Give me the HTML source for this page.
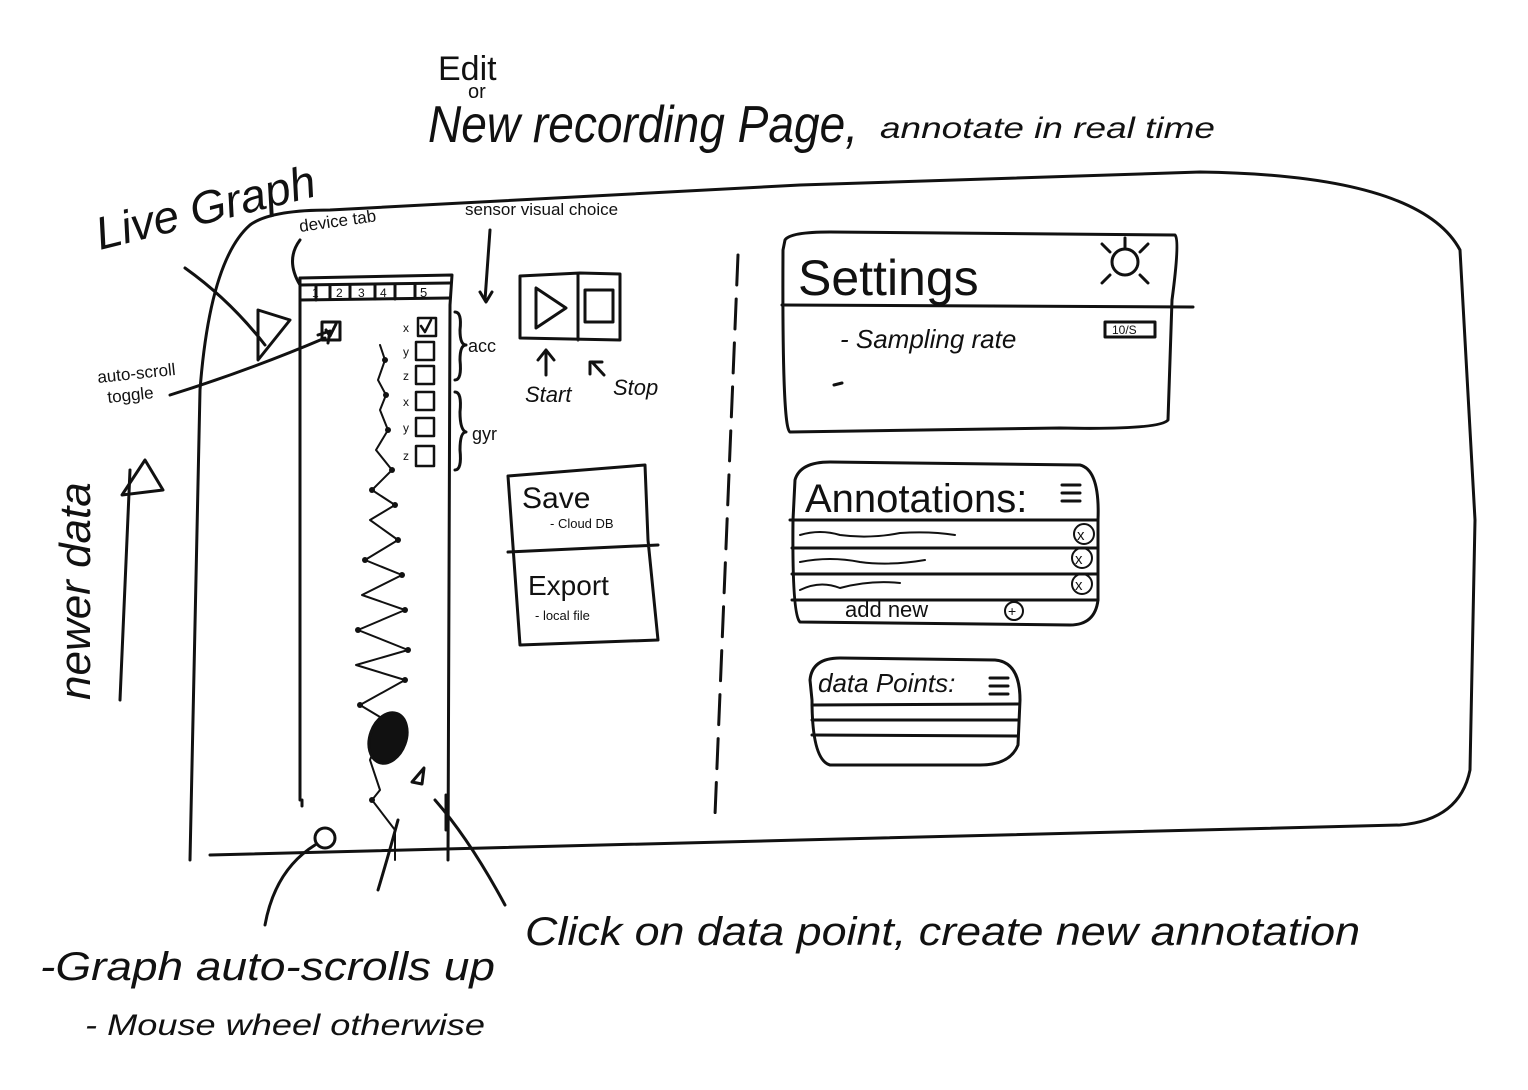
<!DOCTYPE html>
<html><head><meta charset="utf-8"><style>
html,body{margin:0;padding:0;background:#fff;}
svg{display:block}
text{font-family:"Liberation Sans",sans-serif;fill:#111}
</style></head><body>
<svg width="1528" height="1090" viewBox="0 0 1528 1090" xmlns="http://www.w3.org/2000/svg" fill="none" stroke="#111" stroke-width="3" stroke-linecap="round" stroke-linejoin="round">
<text x="438" y="80" font-size="34" stroke="none">Edit</text>
<text x="468" y="98" font-size="20" stroke="none">or</text>
<text x="428" y="142" font-size="52" stroke="none" font-style="italic" textLength="430" lengthAdjust="spacingAndGlyphs">New recording Page,</text>
<text x="880" y="138" font-size="30" stroke="none" font-style="italic" textLength="335" lengthAdjust="spacingAndGlyphs">annotate in real time</text>
<text x="100" y="250" font-size="46" stroke="none" transform="rotate(-14 100 250)" font-style="italic">Live Graph</text>
<text x="300" y="232" font-size="17" stroke="none" transform="rotate(-8 300 232)">device tab</text>
<text x="465" y="215" font-size="17" stroke="none">sensor visual choice</text>
<text x="98" y="383" font-size="17" stroke="none" transform="rotate(-6 98 383)">auto-scroll</text>
<text x="108" y="403" font-size="17" stroke="none" transform="rotate(-6 108 403)">toggle</text>
<text x="90" y="700" font-size="44" stroke="none" transform="rotate(-90 90 700)" font-style="italic">newer data</text>
<path d="M190 860 L200 390 Q210 260 250 225 Q270 210 330 210 L800 185 L1200 172 Q1420 175 1460 250 L1475 520 L1470 770 Q1460 820 1400 825 L800 840 L210 855"/>
<path d="M120 700 L130 470"/><path d="M122 495 L145 460 L163 490 Z"/>
<path d="M185 268 Q230 300 265 345"/><path d="M258 310 L290 320 L258 360 Z"/>
<path d="M170 395 Q250 370 325 338"/><path d="M318 335 l12 -4 l-2 12"/>
<path d="M300 285 Q285 260 300 240"/>
<path d="M490 230 L485 300"/><path d="M480 292 l6 10 l6 -10"/>
<path d="M300 278 L452 275 L450 305 L448 860"/>
<path d="M300 278 L300 800"/>
<path d="M300 285 L450 283 M300 300 L450 298"/>
<path d="M316 286 V300 M330 285 V299 M350 285 V299 M375 285 V299 M395 285 V299 M415 284 V298"/>
<text x="312" y="297" font-size="12" stroke="none">1</text><text x="336" y="297" font-size="12" stroke="none">2</text><text x="358" y="297" font-size="12" stroke="none">3</text><text x="380" y="297" font-size="12" stroke="none">4</text><text x="420" y="297" font-size="13" stroke="none">5</text>
<rect x="322" y="322" width="18" height="18"/><path d="M326 330 l4 6 l6 -12"/>
<g stroke-width="2.5">
<rect x="418" y="318" width="18" height="18"/><path d="M421 326 l4 6 l6 -12"/>
<rect x="416" y="342" width="18" height="18"/><rect x="416" y="366" width="18" height="18"/>
<rect x="416" y="392" width="18" height="18"/><rect x="416" y="418" width="18" height="18"/><rect x="416" y="446" width="18" height="20"/>
</g>
<text x="403" y="332" font-size="12" stroke="none">x</text><text x="403" y="356" font-size="12" stroke="none">y</text><text x="403" y="380" font-size="12" stroke="none">z</text><text x="403" y="406" font-size="12" stroke="none">x</text><text x="403" y="432" font-size="12" stroke="none">y</text><text x="403" y="460" font-size="12" stroke="none">z</text>
<path d="M455 312 Q462 312 460 330 Q460 345 466 345 Q460 345 460 360 Q462 380 455 380"/>
<path d="M455 392 Q462 392 460 412 Q460 430 466 432 Q460 432 460 450 Q462 470 455 470"/>
<text x="468" y="352" font-size="18" stroke="none">acc</text><text x="472" y="440" font-size="18" stroke="none">gyr</text>
<path stroke-width="2" d="M380 345 L385 360 L378 380 L386 395 L380 410 L388 430 L376 450 L392 470 L372 490 L395 505 L370 520 L398 540 L365 560 L402 575 L362 595 L405 610 L358 630 L408 650 L356 665 L405 680 L360 705 L385 720 L370 760 L380 790 L372 800 L395 830 L395 860"/>
<g fill="#111" stroke="none"><circle cx="385" cy="360" r="3"/><circle cx="386" cy="395" r="3"/><circle cx="388" cy="430" r="3"/><circle cx="392" cy="470" r="3"/><circle cx="395" cy="505" r="3"/><circle cx="398" cy="540" r="3"/><circle cx="402" cy="575" r="3"/><circle cx="405" cy="610" r="3"/><circle cx="408" cy="650" r="3"/><circle cx="405" cy="680" r="3"/><circle cx="372" cy="490" r="3"/><circle cx="365" cy="560" r="3"/><circle cx="358" cy="630" r="3"/><circle cx="360" cy="705" r="3"/><circle cx="372" cy="800" r="3"/></g>
<ellipse cx="388" cy="738" rx="18" ry="26" fill="#111" transform="rotate(20 388 738)"/>
<path d="M302 800 V806 M446 795 V830"/>
<path d="M412 782 l12 -14 l-2 16 z"/>
<path d="M520 276 L580 273 L620 274 L620 340 L520 338 Z M578 274 L578 340"/>
<path d="M536 288 L536 328 L566 308 Z"/><rect x="585" y="290" width="28" height="32"/>
<path d="M546 375 L546 350 M538 360 l8 -10 l8 10"/><path d="M604 375 L592 362 M590 374 l0 -12 l12 0"/>
<text x="525" y="402" font-size="22" stroke="none" font-style="italic">Start</text><text x="613" y="395" font-size="22" stroke="none" font-style="italic">Stop</text>
<path d="M508 476 L645 465 L648 540 L658 640 L520 645 L508 476 M508 552 L658 545"/>
<text x="522" y="508" font-size="30" stroke="none">Save</text><text x="550" y="528" font-size="13" stroke="none">- Cloud DB</text>
<text x="528" y="595" font-size="28" stroke="none">Export</text><text x="535" y="620" font-size="13" stroke="none">- local file</text>
<path stroke-dasharray="30 14" d="M738 255 L715 815"/>
<path d="M785 240 Q790 232 830 232 L1175 235 Q1180 240 1172 300 L1168 420 Q1160 430 1060 428 L790 432 Q782 430 783 250 Z"/>
<path d="M782 305 L1193 307"/>
<text x="798" y="295" font-size="50" stroke="none">Settings</text>
<circle cx="1125" cy="262" r="13"/><path d="M1110 252 l-8 -8 M1140 252 l8 -8 M1110 275 l-8 8 M1140 275 l8 8 M1125 248 v-10"/>
<text x="840" y="348" font-size="26" stroke="none" font-style="italic">- Sampling rate</text>
<rect x="1105" y="322" width="50" height="15"/><text x="1112" y="334" font-size="12" stroke="none">10/S</text>
<path d="M834 385 l8 -2"/>
<path d="M795 480 Q800 462 830 462 L1080 465 Q1100 470 1098 520 L1098 600 Q1095 625 1070 625 L800 622 Q792 615 793 520 Z"/>
<text x="805" y="512" font-size="40" stroke="none">Annotations:</text>
<path d="M1062 485 h18 M1062 493 h18 M1062 501 h18"/>
<path d="M790 520 L1098 520 M792 548 L1098 548 M792 574 L1098 574 M792 600 L1098 600"/>
<path stroke-width="2" d="M800 535 q20 -6 40 0 q30 4 60 -2 q30 -2 55 2 M800 562 q30 -6 60 0 q30 4 65 -2 M800 590 q20 -10 40 -2 q30 -8 60 -5"/>
<g stroke-width="2"><circle cx="1084" cy="534" r="10"/><circle cx="1082" cy="558" r="10"/><circle cx="1082" cy="584" r="10"/><circle cx="1014" cy="611" r="9"/></g>
<text x="1077" y="540" font-size="15" stroke="none">x</text><text x="1075" y="564" font-size="15" stroke="none">x</text><text x="1075" y="590" font-size="15" stroke="none">x</text><text x="1008" y="616" font-size="14" stroke="none">+</text>
<text x="845" y="617" font-size="22" stroke="none">add  new</text>
<path d="M810 680 Q812 658 840 658 L995 660 Q1020 662 1020 700 L1018 745 Q1010 765 980 765 L830 765 Q812 760 812 700 Z"/>
<text x="818" y="692" font-size="26" stroke="none" font-style="italic">data Points:</text>
<path d="M990 678 h18 M990 686 h18 M990 694 h18"/>
<path d="M812 705 L1018 704 M812 720 L1018 720 M812 735 L1018 736"/>
<path d="M265 925 Q275 870 315 845"/><circle cx="325" cy="838" r="10"/>
<path d="M378 890 Q390 850 398 820"/>
<path d="M505 905 Q470 840 435 800"/>
<text x="40" y="980" font-size="40" stroke="none" font-style="italic" textLength="455" lengthAdjust="spacingAndGlyphs">-Graph auto-scrolls up</text>
<text x="85" y="1035" font-size="30" stroke="none" font-style="italic" textLength="400" lengthAdjust="spacingAndGlyphs">- Mouse wheel otherwise</text>
<text x="525" y="945" font-size="40" stroke="none" font-style="italic" textLength="835" lengthAdjust="spacingAndGlyphs">Click on data point, create new annotation</text>
</svg>
</body></html>
